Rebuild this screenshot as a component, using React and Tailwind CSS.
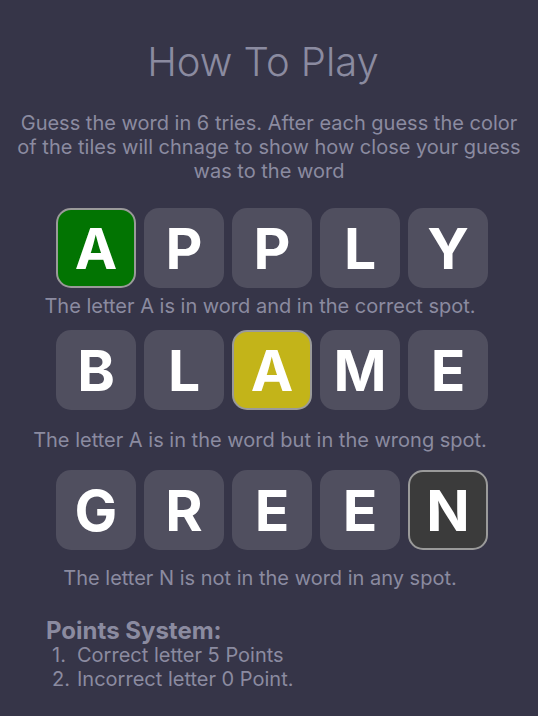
const rows = [
  { word: 'APPLY', mark: 0, tone: 'bg-[#027402]', note: 'The letter A is in word and in the correct spot.', gapTop: 'mt-[6px]', gapBottom: 'mb-[12px]' },
  { word: 'BLAME', mark: 2, tone: 'bg-[#c3b419]', note: 'The letter A is in the word but in the wrong spot.', gapTop: 'mt-[18px]', gapBottom: 'mb-[18px]' },
  { word: 'GREEN', mark: 4, tone: 'bg-[#3b3b3b]', note: 'The letter N is not in the word in any spot.', gapTop: 'mt-[16px]', gapBottom: 'mb-0' },
];

const points = ['Correct letter 5 Points', 'Incorrect letter 0 Point.'];

const Tile = ({ letter, highlight, tone }) => (
  <div
    className={`w-20 h-20 rounded-[15px] flex items-center justify-center text-[57px] leading-none font-bold text-white ${
      highlight ? `${tone} border-2 border-[#9a9a9a]` : 'bg-[#504f5f]'
    }`}
  >
    {letter}
  </div>
);

export default function App() {
  return (
    <div
      className="min-h-[716px] w-full bg-[#363548] text-[#8b8ba0] px-4 pt-[42px]"
      style={{ fontFamily: 'Inter, "Noto Sans", sans-serif' }}
    >
      <h1 className="text-center text-[40px] leading-10 font-light pr-[12px]">How To Play</h1>
      <p className="mt-[29px] text-center text-[20px] leading-6">
        Guess the word in 6 tries. After each guess the color of the tiles will chnage to show how close your guess was to the word
      </p>

      <div className="mt-[25px]">
        {rows.map((row) => (
          <div key={row.word}>
            <div className="flex justify-center gap-2 pl-[6px]">
              {row.word.split('').map((ch, i) => (
                <Tile key={i} letter={ch} highlight={i === row.mark} tone={row.tone} />
              ))}
            </div>
            <p className={`${row.gapTop} ${row.gapBottom} text-center text-[20px] leading-6 pr-[18px] whitespace-nowrap`}>{row.note}</p>
          </div>
        ))}
      </div>

      <div className="mt-[27px] pl-[30px]">
        <h2 className="text-[24px] leading-7 font-bold">Points System:</h2>
        <ol className="-mt-[2px] text-[20px] leading-6 pl-[6px]">
          {points.map((p, i) => (
            <li key={i} className="flex">
              <span className="w-[25px] shrink-0">{i + 1}.</span>
              <span>{p}</span>
            </li>
          ))}
        </ol>
      </div>
    </div>
  );
}
